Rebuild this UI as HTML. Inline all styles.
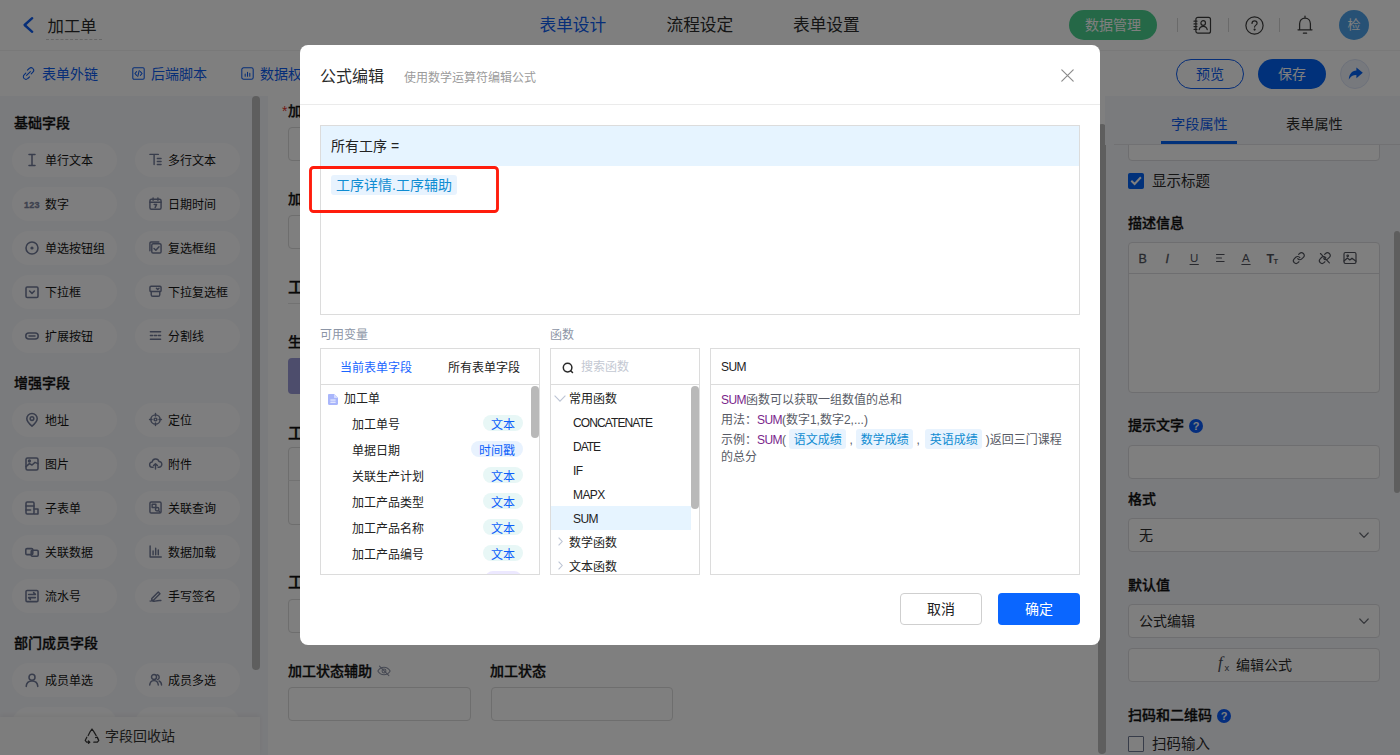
<!DOCTYPE html>
<html lang="zh-CN">
<head>
<meta charset="utf-8">
<title>加工单 - 公式编辑</title>
<style>
*{box-sizing:border-box;margin:0;padding:0}
html,body{width:1400px;height:755px;overflow:hidden;background:#fff}
body{font-family:"Liberation Sans","Noto Sans CJK SC",sans-serif;font-size:12px;color:#222;position:relative;-webkit-font-smoothing:antialiased}
.abs{position:absolute}
svg{display:block;overflow:visible}
#app{position:absolute;left:0;top:0;width:1400px;height:755px;overflow:hidden;background:#fff}

/* ---------- top header ---------- */
.hdr{position:absolute;left:0;top:0;width:1400px;height:51px;background:#fff;border-bottom:1px solid #f4f4f4}
.hdr .back{position:absolute;left:22px;top:17px}
.hdr .title{position:absolute;left:46px;top:12px;height:28px;line-height:28px;font-size:16.400px;color:#2b2b2b;padding:0 2px 0 1.500px;border-bottom:1px dashed #cfcfcf;width:56px;white-space:nowrap}
.hdr .tab{position:absolute;top:0;height:50px;line-height:52px;font-size:16.700px;color:#2b2b2b;white-space:nowrap}
.hdr .tab.on{color:#0d5cf0}
.pill-green{position:absolute;left:1069px;top:10px;width:88px;height:30px;border-radius:15px;background:#4ad08f;color:#fff;font-size:14px;line-height:30px;text-align:center}
.hdr .sep{position:absolute;top:18px;width:1px;height:14px;background:#d4d4d4}
.avatar{position:absolute;left:1339px;top:10px;width:30px;height:30px;border-radius:50%;background:#4fa3ea;color:#fff;font-size:13px;line-height:30px;text-align:center}

/* ---------- toolbar ---------- */
.tbar{position:absolute;left:0;top:51px;width:1400px;height:45px;background:#fff;box-shadow:0 2px 4px rgba(0,0,0,.06)}
.tbar .lnk{position:absolute;top:0;height:45px;line-height:47px;font-size:14px;color:#0d5cf0;white-space:nowrap}
.tbar .lnk svg{position:absolute;top:16px}
.btn-o{position:absolute;left:1176px;top:8px;width:68px;height:30px;border-radius:15px;border:1px solid #0d5cf0;color:#0d5cf0;font-size:14px;line-height:28px;text-align:center;background:#fff}
.btn-p{position:absolute;left:1258px;top:8px;width:68px;height:30px;border-radius:15px;background:#0262f5;color:#fff;font-size:14px;line-height:30px;text-align:center}
.btn-s{position:absolute;left:1340px;top:8px;width:30px;height:30px;border-radius:50%;background:#eef2fb;border:1px solid #dbe3f5}

/* ---------- left palette ---------- */
.left{position:absolute;left:0;top:96px;width:268px;height:659px;background:#f5f6fa;overflow:hidden}
.left h4{position:absolute;left:14px;font-size:14px;font-weight:500;-webkit-text-stroke:.3px #111;color:#111;height:20px;line-height:20px;white-space:nowrap}
.fp{position:absolute;width:105px;height:34px;border-radius:17px;background:#fdfdfe;font-size:12px;line-height:36px;color:#141414;white-space:nowrap;padding-left:33px}
.fp.c2{padding-left:33px}
.fp svg{position:absolute;left:13px;top:9.5px;width:14px;height:14px}.fp.c2 svg{left:13.5px;top:10px;width:13px;height:13px}
.left .sb{position:absolute;left:252px;top:0;width:8px;height:574px;border-radius:4px;background:#bdbdbd}
.left .foot{position:absolute;left:0;top:621px;width:260px;height:38px;background:#fafafa;box-shadow:0 -2px 4px rgba(0,0,0,.05);font-size:14px;line-height:38px;color:#333}
.left .foot span{position:absolute;left:105px;top:0}
.left .foot svg{position:absolute;left:84px;top:11px}

/* ---------- canvas ---------- */
.cv{position:absolute;left:268px;top:96px;width:838px;height:659px;background:#fff;overflow:hidden}
.cv .lab{position:absolute;font-size:14px;font-weight:500;-webkit-text-stroke:.3px #111;color:#111;height:20px;line-height:20px;white-space:nowrap}
.cv .lab i{font-style:normal;color:#e5352b;position:absolute;left:-6px;top:0;font-weight:normal;-webkit-text-stroke:0}
.cv .sec{position:absolute;font-size:16px;color:#111;height:22px;line-height:22px;white-space:nowrap;font-weight:500;-webkit-text-stroke:.3px #111}
.cv .inp{position:absolute;height:34px;border:1px solid #dcdcdc;border-radius:4px;background:#fff}
.cv .hr{position:absolute;height:1px;background:#e4e4e4}
.cv .sb{position:absolute;left:830px;top:28px;width:8px;height:630px;border-radius:4px;background:#bdbdbd}

/* ---------- right props ---------- */
.rt{position:absolute;left:1105px;top:96px;width:295px;height:659px;background:#f5f6fa;overflow:hidden}
.rt .tabs{position:absolute;left:0;top:0;width:295px;height:49px;background:#f5f6fa;z-index:2}
.rt .tabs .ln{position:absolute;left:9px;top:48px;width:286px;height:1px;background:#e2e3e6}
.rt .tabs span{position:absolute;top:18px;font-size:14.200px;height:20px;line-height:20px;color:#2b2b2b;white-space:nowrap}
.rt .tabs span.on{color:#0d5cf0}
.rt .tabs .ink{position:absolute;left:56px;top:45px;width:76px;height:3px;background:#0262f5}
.rt h5{position:absolute;left:23px;font-size:14px;font-weight:500;-webkit-text-stroke:.3px #111;color:#111;height:20px;line-height:20px;white-space:nowrap}
.rt .inp{position:absolute;left:23px;width:252px;height:34px;border:1px solid #dcdde0;border-radius:4px;background:#fff;font-size:14px;line-height:32px;padding-left:10px;color:#2b2b2b}
.rt .chk{position:absolute;left:23px;width:16px;height:16px;border:1px solid #6f7892;border-radius:1px;background:#fff}
.rt .chk.on{background:#0262f5;border-color:#0262f5;border-radius:1.5px}
.rt .ctxt{position:absolute;left:47px;font-size:14.500px;height:20px;line-height:20px;color:#2b2b2b;white-space:nowrap}
.rt .q{position:absolute;width:14px;height:14px;border-radius:50%;font-style:normal;background:#0a5cfa;color:#fff;font-size:11px;font-weight:bold;line-height:14px;text-align:center}
.rt .sb{position:absolute;left:289px;top:135px;width:6px;height:262px;border-radius:3px;background:#bdbdbd}

/* ---------- mask + modal ---------- */
.mask{z-index:10;position:absolute;left:0;top:0;width:1400px;height:755px;background:rgba(0,0,0,.5)}
.modal{z-index:11;position:absolute;left:300px;top:45px;width:800px;height:600px;background:#fff;border-radius:8px;overflow:hidden}
.modal .mh{position:absolute;left:0;top:0;width:800px;height:60px;border-bottom:1px solid #ebebeb}
.modal .mh b{position:absolute;left:20px;top:20px;font-size:16px;font-weight:normal;color:#2a2a2a;height:24px;line-height:24px;white-space:nowrap}
.modal .mh em{position:absolute;left:104px;top:21px;font-style:normal;font-size:12px;color:#9b9b9b;height:24px;line-height:24px;white-space:nowrap}
.modal .mh svg{position:absolute;left:761px;top:24px}
.fbox{position:absolute;left:20px;top:80px;width:760px;height:190px;border:1px solid #dcdcdc;background:#fff}
.fbox .fh{position:absolute;left:0;top:0;width:758px;height:40px;background:#e6f4ff;font-size:14px;line-height:40px;padding-left:10px;color:#222;white-space:pre}
.tag{display:inline-block;background:#e8f3fe;color:#0f8cd2;border-radius:3px;white-space:nowrap}
.fbox .tag{position:absolute;left:10px;top:49px;width:126px;height:20px;line-height:20px;font-size:14px;text-align:center}
.redbox{position:absolute;left:9px;top:121px;width:190px;height:47px;border:2.5px solid #ff2216;border-radius:4px}
.cap{position:absolute;top:280px;font-size:12px;color:#8c95a6;height:20px;line-height:20px;white-space:nowrap}
.pn{position:absolute;top:303px;height:227px;border:1px solid #dcdcdc;background:#fff;overflow:hidden}
.pn .ph{position:absolute;left:0;top:0;right:0;height:36px;border-bottom:1px solid #dcdcdc;font-size:12px;line-height:37px;white-space:nowrap}
.pn .row{position:absolute;font-size:12px;height:20px;line-height:20px;color:#222;white-space:nowrap}
.pn .sbar{position:absolute;width:7.5px;border-radius:4px;background:#b9b9b9}
.tg{position:absolute;height:16px;line-height:21px;overflow:hidden;border-radius:8px;font-size:12px;text-align:center;color:#0d60fa;background:#e8f7f6;white-space:nowrap}
.tg.t2{background:#e8f2fe}
.lat{letter-spacing:-.6px}
.desc{z-index:0;position:absolute;left:10px;top:43px;width:348px;font-size:12px;color:#585b66;line-height:16px}
.desc p{margin-bottom:4px}
.desc u{text-decoration:none;color:#7a1f8b}
.desc .tag{position:relative;display:inline;background:none;padding:0 4.5px}
.desc .tag::before{content:"";position:absolute;left:0;right:0;top:-4px;height:19.5px;background:#e8f3fe;border-radius:3px;z-index:-1}
.mbtn{position:absolute;top:548px;width:82px;height:32px;border-radius:4px;font-size:14px;line-height:30px;text-align:center}
.mbtn.c{left:600px;border:1px solid #cfcfcf;color:#222;background:#fff}
.mbtn.ok{left:698px;background:#0a66ff;color:#fff;line-height:32px}
</style>
</head>
<body>
<div id="app">

<!-- ================= header ================= -->
<div class="hdr">
  <svg class="back" width="12" height="16" viewBox="0 0 12 16"><path d="M10.2 1.2 L2.6 8 L10.2 14.8" fill="none" stroke="#0d5cf0" stroke-width="2.4" stroke-linecap="round" stroke-linejoin="round"/></svg>
  <div class="title">加工单</div>
  <div class="tab on" style="left:539.500px">表单设计</div>
  <div class="tab" style="left:666.500px">流程设定</div>
  <div class="tab" style="left:793px">表单设置</div>
  <div class="pill-green">数据管理</div>
  <i class="sep" style="left:1177px"></i>
  <i class="sep" style="left:1228px"></i>
  <i class="sep" style="left:1279px"></i>
  <svg class="abs" style="left:1193px;top:16px" width="18" height="18" viewBox="0 0 18 18" fill="none" stroke="#3d3d3d" stroke-width="1.2" stroke-linecap="round" stroke-linejoin="round"><rect x="2.900" y="1.400" width="14.600" height="15.800" rx="2"/><path d="M1 5.200h3M1 7.900h3M1 10.600h3M1 13.300h3"/><circle cx="10.2" cy="7" r="2.3"/><path d="M6.2 13.6c.4-2.2 2-3.3 4-3.3s3.6 1.1 4 3.3"/></svg>
  <svg class="abs" style="left:1245px;top:16px" width="19" height="19" viewBox="0 0 19 19" fill="none" stroke="#3d3d3d" stroke-width="1.2" stroke-linecap="round" stroke-linejoin="round"><circle cx="9.5" cy="9.5" r="8.6"/><path d="M7 7.4c0-1.5 1.1-2.5 2.6-2.5s2.5 1 2.5 2.3c0 1.9-2.5 2-2.5 3.9"/><circle cx="9.6" cy="13.6" r=".5" fill="#333"/></svg>
  <svg class="abs" style="left:1297px;top:15px" width="16" height="20" viewBox="0 0 16 20" fill="none" stroke="#3d3d3d" stroke-width="1.25" stroke-linecap="round" stroke-linejoin="round"><path d="M8 1v1.6M2.6 14.6V8.8C2.6 5.4 4.9 3 8 3s5.4 2.4 5.4 5.8v5.8M1 14.8h14M6.4 18.2h3.2"/></svg>
  <div class="avatar">检</div>
</div>

<!-- ================= toolbar ================= -->
<div class="tbar">
  <div class="lnk" style="left:42px"><svg style="left:-20px" width="13" height="13" viewBox="0 0 13 13" fill="none" stroke="#0d5cf0" stroke-width="1.050" stroke-linecap="round"><path d="M5.4 3.2 7.2 1.5a2.6 2.6 0 0 1 3.7 3.7L9.2 6.9M7.6 9.8 5.8 11.5a2.6 2.6 0 0 1-3.7-3.7l1.7-1.7M4.6 8.4l3.8-3.8"/></svg>表单外链</div>
  <div class="lnk" style="left:151px"><svg style="left:-19px" width="13" height="13" viewBox="0 0 13 13" fill="none" stroke="#0d5cf0" stroke-width="1.050" stroke-linecap="round" stroke-linejoin="round"><rect x=".8" y=".8" width="11.4" height="11.4" rx="1.200"/><path d="M4.6 4.6 2.9 6.5l1.7 1.9M8.4 4.6l1.7 1.9-1.7 1.9M7.2 3.6 5.8 9.4"/></svg>后端脚本</div>
  <div class="lnk" style="left:260px"><svg style="left:-19px" width="13" height="13" viewBox="0 0 13 13" fill="none" stroke="#0d5cf0" stroke-width="1.050" stroke-linecap="round" stroke-linejoin="round"><rect x=".8" y=".8" width="11.4" height="11.4" rx="1.800"/><path d="M4.2 9.2V7M6.5 9.2V5.2M8.8 9.2V6.2"/></svg>数据权</div>
  <div class="btn-o">预览</div>
  <div class="btn-p">保存</div>
  <div class="btn-s"><svg class="abs" style="left:7px;top:7px" width="15" height="14" viewBox="0 0 15 14"><path d="M8.400 0.400 14.800 5.800 8.400 11.200V7.900C5.200 7.800 2.800 9 .8 12.600 1 7.400 3.800 3.900 8.400 3.600Z" fill="#0262f5"/></svg></div>
</div>

<!-- ================= left palette ================= -->
<div class="left">
  <h4 style="top:17px">基础字段</h4>
  <div class="fp" style="left:12px;top:47px"><svg width="14" height="14" viewBox="0 0 14 14" fill="none" stroke="#717a98" stroke-width="1.55" stroke-linecap="round" stroke-linejoin="round"><path d="M4 1.5h6M4 12.5h6M7 1.5v11"/></svg>单行文本</div>
  <div class="fp c2" style="left:135px;top:47px"><svg width="14" height="14" viewBox="0 0 14 14" fill="none" stroke="#717a98" stroke-width="1.55" stroke-linecap="round" stroke-linejoin="round"><path d="M1 1.5h9M5.5 1.5v11M9 6h4M9 9.2h4M9 12.4h4"/></svg>多行文本</div>
  <div class="fp" style="left:12px;top:91px"><svg style="width:18px;height:14px;left:12px;top:10px" width="18" height="14" viewBox="0 0 18 14"><text x="0" y="10.600" font-family="Liberation Sans, sans-serif" font-size="9" font-weight="bold" letter-spacing="0.3" fill="#7a829c" stroke="#7a829c" stroke-width=".35">123</text></svg>数字</div>
  <div class="fp c2" style="left:135px;top:91px"><svg width="14" height="14" viewBox="0 0 14 14" fill="none" stroke="#717a98" stroke-width="1.55" stroke-linecap="round" stroke-linejoin="round"><rect x="1" y="2.4" width="12" height="10.8" rx="1.6"/><path d="M1 5.6h12M4.4 1v2.6M9.6 1v2.6M5.6 8h2.6l-1.6 3.4"/></svg>日期时间</div>
  <div class="fp" style="left:12px;top:135px"><svg width="14" height="14" viewBox="0 0 14 14" fill="none" stroke="#717a98" stroke-width="1.55" stroke-linecap="round" stroke-linejoin="round"><circle cx="7" cy="7" r="6"/><circle cx="7" cy="7" r="1.6" fill="#717a98" stroke="none"/></svg>单选按钮组</div>
  <div class="fp c2" style="left:135px;top:135px"><svg width="14" height="14" viewBox="0 0 14 14" fill="none" stroke="#717a98" stroke-width="1.55" stroke-linecap="round" stroke-linejoin="round"><path d="M1 10.6V2.2C1 1.5 1.5 1 2.2 1h8.4"/><rect x="3" y="3" width="10" height="10" rx="1.4"/><path d="M5.4 8l2 2 3.4-3.8"/></svg>复选框组</div>
  <div class="fp" style="left:12px;top:179px"><svg width="14" height="14" viewBox="0 0 14 14" fill="none" stroke="#717a98" stroke-width="1.55" stroke-linecap="round" stroke-linejoin="round"><rect x="1" y="2" width="12" height="10.4" rx="1.2"/><path d="M4.6 6l2.4 2.4L9.4 6"/></svg>下拉框</div>
  <div class="fp c2" style="left:135px;top:179px"><svg width="14" height="14" viewBox="0 0 14 14" fill="none" stroke="#717a98" stroke-width="1.55" stroke-linecap="round" stroke-linejoin="round"><rect x="1" y="1.4" width="12" height="5.6" rx="1.2"/><path d="M8 3.4l1.4 1.4 1.4-1.4"/><path d="M2.4 7v3.4c0 1 .8 1.8 1.8 1.8h5.6c1 0 1.8-.8 1.8-1.8V7"/></svg>下拉复选框</div>
  <div class="fp" style="left:12px;top:223px"><svg width="14" height="14" viewBox="0 0 14 14" fill="none" stroke="#717a98" stroke-width="1.55" stroke-linecap="round" stroke-linejoin="round"><rect x=".8" y="4" width="12.4" height="6" rx="3"/><path d="M4 7h6"/></svg>扩展按钮</div>
  <div class="fp c2" style="left:135px;top:223px"><svg width="14" height="14" viewBox="0 0 14 14" fill="none" stroke="#717a98" stroke-width="1.55" stroke-linecap="round" stroke-linejoin="round"><path d="M1.5 3h11M1.5 11h11M1.5 7h2.4M5.8 7h2.4M10.1 7h2.4"/></svg>分割线</div>
  <h4 style="top:277px">增强字段</h4>
  <div class="fp" style="left:12px;top:307px"><svg width="14" height="14" viewBox="0 0 14 14" fill="none" stroke="#717a98" stroke-width="1.55" stroke-linecap="round" stroke-linejoin="round"><path d="M7 13.2S1.8 9 1.8 5.6a5.2 5.2 0 0 1 10.4 0C12.200 9 7 13.2 7 13.2Z"/><circle cx="7" cy="5.6" r="1.8"/></svg>地址</div>
  <div class="fp c2" style="left:135px;top:307px"><svg width="14" height="14" viewBox="0 0 14 14" fill="none" stroke="#717a98" stroke-width="1.55" stroke-linecap="round" stroke-linejoin="round"><circle cx="7" cy="7" r="5"/><circle cx="7" cy="7" r="1.5"/><path d="M7 .6v2.6M7 10.800v2.6M.6 7h2.6M10.800 7h2.600"/></svg>定位</div>
  <div class="fp" style="left:12px;top:351px"><svg width="14" height="14" viewBox="0 0 14 14" fill="none" stroke="#717a98" stroke-width="1.55" stroke-linecap="round" stroke-linejoin="round"><rect x="1" y="1" width="12" height="12" rx="1.6"/><path d="M1 9.6l3.4-3 2.600 1.4 3-2.600L13 6.600"/><circle cx="4.400" cy="4" r=".9"/></svg>图片</div>
  <div class="fp c2" style="left:135px;top:351px"><svg width="14" height="14" viewBox="0 0 14 14" fill="none" stroke="#717a98" stroke-width="1.55" stroke-linecap="round" stroke-linejoin="round"><path d="M4.400 11H3.600A2.800 2.800 0 0 1 3.400 5.400 3.800 3.800 0 0 1 10.800 4.800 3.100 3.100 0 0 1 10.600 11H9.800M7 13V7.400M4.900 9.200 7 7.200l2.100 2"/></svg>附件</div>
  <div class="fp" style="left:12px;top:395px"><svg width="14" height="14" viewBox="0 0 14 14" fill="none" stroke="#717a98" stroke-width="1.55" stroke-linecap="round" stroke-linejoin="round"><rect x="1" y="1" width="8" height="12" rx="1.200"/><path d="M1 5h8M9 8h4v5H9M1 9h4.600"/></svg>子表单</div>
  <div class="fp c2" style="left:135px;top:395px"><svg width="14" height="14" viewBox="0 0 14 14" fill="none" stroke="#717a98" stroke-width="1.55" stroke-linecap="round" stroke-linejoin="round"><rect x="1" y="1" width="12" height="12" rx="1.400"/><rect x="3.400" y="3.400" width="4" height="3.600"/><circle cx="8.800" cy="8.800" r="1.900"/><path d="M10.200 10.200 12 12"/></svg>关联查询</div>
  <div class="fp" style="left:12px;top:439px"><svg width="14" height="14" viewBox="0 0 14 14" fill="none" stroke="#717a98" stroke-width="1.55" stroke-linecap="round" stroke-linejoin="round"><rect x=".8" y="3.600" width="7" height="6" rx="1.200"/><rect x="6.200" y="5.200" width="7" height="6" rx="1.200"/></svg>关联数据</div>
  <div class="fp c2" style="left:135px;top:439px"><svg width="14" height="14" viewBox="0 0 14 14" fill="none" stroke="#717a98" stroke-width="1.55" stroke-linecap="round" stroke-linejoin="round"><path d="M1.200 1v12h12M4.400 10.400V6.400M7.200 10.400V3.600M10 10.400V5.400"/></svg>数据加载</div>
  <div class="fp" style="left:12px;top:483px"><svg width="14" height="14" viewBox="0 0 14 14" fill="none" stroke="#717a98" stroke-width="1.55" stroke-linecap="round" stroke-linejoin="round"><rect x="1" y="1.400" width="12" height="11.200" rx="1.200"/><path d="M3.600 5.400h6.800M8.600 3.600l1.800 1.800M10.400 8.600H3.600M5.400 10.400 3.600 8.600"/></svg>流水号</div>
  <div class="fp c2" style="left:135px;top:483px"><svg width="14" height="14" viewBox="0 0 14 14" fill="none" stroke="#717a98" stroke-width="1.55" stroke-linecap="round" stroke-linejoin="round"><path d="M3 10.200 10 3.200l1.800 1.800-7 7H3ZM1.200 13c2-.8 3.400.6 5.400 0s3.400-1 6.200-.6"/></svg>手写签名</div>
  <h4 style="top:537px">部门成员字段</h4>
  <div class="fp" style="left:12px;top:567px"><svg width="14" height="14" viewBox="0 0 14 14" fill="none" stroke="#717a98" stroke-width="1.55" stroke-linecap="round" stroke-linejoin="round"><circle cx="7" cy="4.200" r="3"/><path d="M1.200 13.400c.2-3.400 2.600-5.400 5.800-5.400s5.600 2 5.800 5.400"/></svg>成员单选</div>
  <div class="fp c2" style="left:135px;top:567px"><svg width="14" height="14" viewBox="0 0 14 14" fill="none" stroke="#717a98" stroke-width="1.55" stroke-linecap="round" stroke-linejoin="round"><circle cx="5.400" cy="4.400" r="2.700"/><path d="M.8 13c.2-3 2-4.800 4.600-4.800S9.800 10 10 13M8.800 1.900a2.700 2.700 0 0 1 .4 5.200M10.800 8.600c1.600.6 2.600 2.200 2.700 4.400"/></svg>成员多选</div>
  <div class="fp" style="left:12px;top:611px"><svg width="14" height="14" viewBox="0 0 14 14" fill="none" stroke="#717a98" stroke-width="1.55" stroke-linecap="round" stroke-linejoin="round"><circle cx="7" cy="4.200" r="3"/><path d="M1.200 13.400c.2-3.400 2.600-5.400 5.800-5.400s5.600 2 5.800 5.400"/></svg></div>
  <div class="fp c2" style="left:135px;top:611px"><svg width="14" height="14" viewBox="0 0 14 14" fill="none" stroke="#717a98" stroke-width="1.55" stroke-linecap="round" stroke-linejoin="round"><circle cx="5.400" cy="4.400" r="2.700"/><path d="M.8 13c.2-3 2-4.800 4.600-4.800S9.800 10 10 13M8.800 1.900a2.700 2.700 0 0 1 .4 5.200M10.800 8.600c1.600.6 2.600 2.200 2.700 4.400"/></svg></div>
  <div class="sb"></div>
  <div class="foot"><svg width="16" height="16" viewBox="0 0 16 16" fill="none" stroke="#333" stroke-width="1.200" stroke-linecap="round" stroke-linejoin="round"><path d="M6.200 3.600 8 1l1.800 2.600M9.800 3.600l2.400 4M4.200 7.600 6.200 3.600M2.800 9.200 1.200 12.400l1.400 1.800h3.200M5.800 14.200l-1.400-1.400M5.800 14.200l-1.400 1.200M13.400 9.200l1.400 3.200-1.400 1.800h-3.600M13.400 9.200l-1.800.4M13.400 9.200l.4 1.800"/></svg><span>字段回收站</span></div>
</div>
<!-- ================= canvas ================= -->
<div class="cv">
  <div class="lab" style="left:20px;top:5px"><i>*</i>加</div>
  <div class="inp" style="left:20px;top:31px;width:182px"></div>
  <div class="lab" style="left:20px;top:93px">加</div>
  <div class="inp" style="left:20px;top:119px;width:182px"></div>
  <div class="sec" style="left:20px;top:181px">工</div>
  <div class="hr" style="left:20px;top:207px;width:790px"></div>
  <div class="lab" style="left:20px;top:236px">生</div>
  <div class="abs" style="left:20px;top:262px;width:60px;height:36px;background:#9a9ad8;border-radius:4px 0 0 4px"></div>
  <div class="sec" style="left:20px;top:327px">工</div>
  <div class="inp" style="left:20px;top:351px;width:790px;height:78px"></div>
  <div class="hr" style="left:20px;top:384px;width:790px"></div>
  <div class="sec" style="left:20px;top:476px">工</div>
  <div class="inp" style="left:20px;top:503px;width:182px"></div>
  <div class="lab" style="left:20px;top:565px">加工状态辅助<svg class="abs" style="left:89px;top:4px" width="14" height="12" viewBox="0 0 15 13" fill="none" stroke="#8c92a6" stroke-width="1.100" stroke-linecap="round" stroke-linejoin="round"><path d="M.8 6.500C2.400 3.800 4.800 2.400 7.500 2.400s5.100 1.400 6.700 4.100c-1.600 2.700-4 4.100-6.700 4.100S2.400 9.200.8 6.500Z"/><circle cx="7.500" cy="6.500" r="2.100"/><path d="M2.600 1.200 12.800 11.600"/></svg></div>
  <div class="inp" style="left:20px;top:591px;width:183px"></div>
  <div class="lab" style="left:222px;top:565px">加工状态</div>
  <div class="inp" style="left:223px;top:591px;width:182px"></div>
</div>
<!-- ================= right properties ================= -->
<div class="rt">
  <div class="inp" style="top:31px"></div>
  <div class="tabs"><span class="on" style="left:66px">字段属性</span><span style="left:181px">表单属性</span><i class="ln"></i><i class="ink"></i></div>
  <div class="chk on" style="top:77px"><svg class="abs" style="left:0;top:0" width="14" height="14" viewBox="0 0 14 14"><path d="M2.300 6.800 5.600 10 11.900 3.300" fill="none" stroke="#fff" stroke-width="2" stroke-linecap="butt" stroke-linejoin="miter"/></svg></div>
  <div class="ctxt" style="top:75px">显示标题</div>
  <h5 style="top:117px">描述信息</h5>
  <div class="inp" style="top:146px;height:151px;padding:0">
    <div class="abs" style="left:0;top:0;width:250px;height:31px;border-bottom:1px solid #dcdde0"></div>
    <svg class="abs" style="left:0;top:-1px" width="250" height="31" viewBox="0 0 250 31" fill="none" stroke="#50535c" stroke-width="1.150" stroke-linecap="round" stroke-linejoin="round">
      <text x="9.500" y="21" font-family="Liberation Sans, sans-serif" font-size="12.500" fill="#50535c" stroke="#50535c" stroke-width=".3">B</text>
      <text x="36.500" y="21" font-family="Liberation Sans, sans-serif" font-size="12.500" font-style="italic" fill="#50535c" stroke="#50535c" stroke-width=".3">I</text>
      <text x="61" y="20" font-family="Liberation Sans, sans-serif" font-size="11.500" fill="#50535c" stroke="none">U</text>
      <path d="M61 22.500h8.400" stroke-width="1"/>
      <path d="M87.500 12.500h7.600M87.500 16h5M87.500 19.500h7.600"/>
      <text x="113" y="20" font-family="Liberation Sans, sans-serif" font-size="11.500" fill="#50535c" stroke="none">A</text>
      <path d="M112.800 22.500h8.400" stroke-width="1"/>
      <text x="137.500" y="21" font-family="Liberation Sans, sans-serif" font-size="12.500" font-weight="bold" fill="#50535c" stroke="none">T</text>
      <text x="144.500" y="21.500" font-family="Liberation Sans, sans-serif" font-size="7.500" font-weight="bold" fill="#50535c" stroke="none">T</text>
      <g transform="translate(163.300 9.600) scale(.54)" stroke-width="2.100"><path d="M10 13a5 5 0 0 0 7.540.540l3-3a5 5 0 0 0-7.070-7.070l-1.720 1.710"/><path d="M14 11a5 5 0 0 0-7.540-.540l-3 3a5 5 0 0 0 7.070 7.070l1.710-1.710"/></g>
      <g transform="translate(189.300 9.600) scale(.54)" stroke-width="2.100"><path d="M10 13a5 5 0 0 0 7.540.540l3-3a5 5 0 0 0-7.070-7.070l-1.720 1.710"/><path d="M14 11a5 5 0 0 0-7.540-.540l-3 3a5 5 0 0 0 7.070 7.070l1.710-1.710"/><path d="M4 3.500 20.500 21"/></g>
      <rect x="215" y="10.500" width="12" height="11" rx="1.400"/><path d="M215 19l3.400-3 2.400 2 2.200-1.800 4 3"/><circle cx="218.700" cy="13.800" r=".8"/>
    </svg>
  </div>
  <h5 style="top:319px">提示文字</h5><i class="q" style="left:84px;top:323px">?</i>
  <div class="inp" style="top:349px"></div>
  <h5 style="top:393px">格式</h5>
  <div class="inp" style="top:422px">无<svg class="abs" style="left:230px;top:13px" width="10" height="7" viewBox="0 0 10 7"><path d="M.8 1l4.200 4.400L9.200 1" fill="none" stroke="#6a6d75" stroke-width="1.200" stroke-linecap="round" stroke-linejoin="round"/></svg></div>
  <h5 style="top:479px">默认值</h5>
  <div class="inp" style="top:508px">公式编辑<svg class="abs" style="left:230px;top:13px" width="10" height="7" viewBox="0 0 10 7"><path d="M.8 1l4.200 4.400L9.200 1" fill="none" stroke="#6a6d75" stroke-width="1.200" stroke-linecap="round" stroke-linejoin="round"/></svg></div>
  <div class="inp" style="top:552px;padding:0"><span class="abs" style="left:89px;top:-2px;font-family:'Liberation Serif',serif;font-style:italic;font-size:16.500px;color:#494c55">f</span><span class="abs" style="left:95.500px;top:7.500px;font-size:9.500px;color:#494c55;line-height:22px">x</span><span class="abs" style="left:107px;top:0">编辑公式</span></div>
  <h5 style="top:609px">扫码和二维码</h5><i class="q" style="left:112px;top:612.500px">?</i>
  <div class="chk" style="top:640px"></div>
  <div class="ctxt" style="top:638px">扫码输入</div>
  <div class="sb"></div>
</div>
<div class="abs" style="left:1098px;top:124px;width:8px;height:630px;border-radius:4px;background:#bdbdbd"></div>
<div class="mask"></div>
<!-- ================= formula dialog ================= -->
<div class="modal">
  <div class="mh"><b>公式编辑</b><em>使用数学运算符编辑公式</em>
    <svg width="13" height="13" viewBox="0 0 13 13"><path d="M.8.8l11.400 11.400M12.200.8.8 12.200" fill="none" stroke="#8c8c8c" stroke-width="1.200" stroke-linecap="round"/></svg>
  </div>
  <div class="fbox">
    <div class="fh">所有工序 =</div>
    <span class="tag">工序详情.工序辅助</span>
  </div>
  <svg class="abs" style="left:9px;top:121px" width="190" height="47" viewBox="0 0 190 47"><rect x="1.5" y="1.5" width="187" height="44" rx="3" fill="none" stroke="#ff1c0c" stroke-width="2.900"/></svg>
  <div class="cap" style="left:20px">可用变量</div>
  <div class="cap" style="left:250px">函数</div>

  <div class="pn" style="left:20px;width:220px">
    <div class="ph" style="line-height:39px"><span class="abs" style="left:19px;color:#1a66ff">当前表单字段</span><span class="abs" style="left:127px;color:#222">所有表单字段</span></div>
    <svg class="abs" style="left:7px;top:44.500px" width="10" height="11" viewBox="0 0 11 12"><path d="M1.200 0h5.600L11 4.200v6.600c0 .7-.5 1.200-1.200 1.200H1.200C.5 12 0 11.500 0 10.800V1.200C0 .5.5 0 1.200 0Z" fill="#a9b6fb"/><path d="M6.600 0v3.400c0 .6.4 1 1 1H11" fill="#d5dcff"/><path d="M2.600 6.600h5.800M2.600 9h5.800" stroke="#fff" stroke-width="1"/></svg>
    <div class="row" style="left:23px;top:40px">加工单</div>
    <div class="row" style="left:31px;top:66px">加工单号</div><i class="tg" style="left:162px;top:66px;width:40px;font-style:normal">文本</i>
    <div class="row" style="left:31px;top:92px">单据日期</div><i class="tg t2" style="left:150px;top:92px;width:52px;font-style:normal">时间戳</i>
    <div class="row" style="left:31px;top:118px">关联生产计划</div><i class="tg" style="left:162px;top:118px;width:40px;font-style:normal">文本</i>
    <div class="row" style="left:31px;top:144px">加工产品类型</div><i class="tg" style="left:162px;top:144px;width:40px;font-style:normal">文本</i>
    <div class="row" style="left:31px;top:170px">加工产品名称</div><i class="tg" style="left:162px;top:170px;width:40px;font-style:normal">文本</i>
    <div class="row" style="left:31px;top:196px">加工产品编号</div><i class="tg" style="left:162px;top:196px;width:40px;font-style:normal">文本</i>
    <i class="tg" style="left:164px;top:222px;width:37px;background:#ece8ff"></i>
    <i class="sbar" style="left:210px;top:37px;height:52px"></i>
  </div>

  <div class="pn" style="left:250px;width:150px">
    <div class="ph"><svg class="abs" style="left:10.500px;top:12.500px" width="12" height="12" viewBox="0 0 12 12" fill="none" stroke="#2a2a2a" stroke-width="1.500" stroke-linecap="round"><circle cx="5.600" cy="5.600" r="4.300"/><path d="M8.800 8.900l1.700 1.600"/></svg><span class="abs" style="left:30px;color:#c3c8d2">搜索函数</span></div>
    <svg class="abs" style="left:2.500px;top:46px" width="12" height="7" viewBox="0 0 12 7"><path d="M.6.700 6 6.100 11.400.7" fill="none" stroke="#bcc4d4" stroke-width="1.100"/></svg>
    <div class="row" style="left:18px;top:40px">常用函数</div>
    <div class="row lat" style="left:22px;top:64px;letter-spacing:-.9px">CONCATENATE</div>
    <div class="row lat" style="left:22px;top:88px;letter-spacing:-1px">DATE</div>
    <div class="row lat" style="left:22px;top:112px">IF</div>
    <div class="row lat" style="left:22px;top:136px">MAPX</div>
    <div class="abs" style="left:0;top:157px;width:140px;height:24px;background:#e6f4ff"></div>
    <div class="row lat" style="left:22px;top:160px">SUM</div>
    <svg class="abs" style="left:6.5px;top:188px" width="5" height="9" viewBox="0 0 5 9"><path d="M.6.600 4.200 4.500.6 8.400" fill="none" stroke="#bcc4d4" stroke-width="1.100"/></svg>
    <div class="row" style="left:18px;top:184px">数学函数</div>
    <svg class="abs" style="left:6.5px;top:212px" width="5" height="9" viewBox="0 0 5 9"><path d="M.6.600 4.200 4.500.6 8.400" fill="none" stroke="#bcc4d4" stroke-width="1.100"/></svg>
    <div class="row" style="left:18px;top:208px">文本函数</div>
    <i class="sbar" style="left:140px;top:37px;height:123px"></i>
  </div>

  <div class="pn" style="left:410px;width:370px">
    <div class="ph"><span class="abs lat" style="left:10px;color:#222">SUM</span></div>
    <div class="desc">
      <p><u class="lat">SUM</u>函数可以获取一组数值的总和</p>
      <p>用法：<u class="lat">SUM</u><span>(数字1,数字2,...)</span></p>
      <p style="line-height:16.500px">示例：<u class="lat">SUM</u>( <span class="tag">语文成绩</span> , <span class="tag">数学成绩</span> ,  <span class="tag" style="margin-left:2px">英语成绩</span> )返回三门课程的总分</p>
    </div>
  </div>

  <div class="mbtn c">取消</div>
  <div class="mbtn ok">确定</div>
</div>
</div>
</body>
</html>
